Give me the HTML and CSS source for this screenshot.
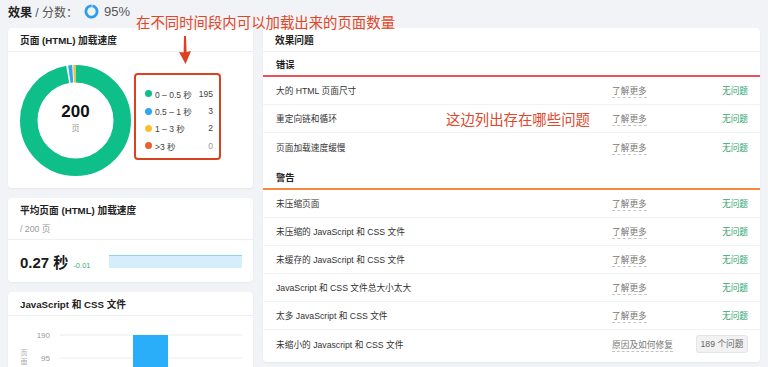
FILE: index.html
```html
<!DOCTYPE html>
<html lang="zh-CN">
<head>
<meta charset="utf-8">
<title>效果</title>
<link rel="stylesheet" href="styles.css">
</head>
<body>
<div class="page">
  <header class="top">
    <span class="top-title">效果</span><span class="top-sub">&nbsp;/ 分数：</span>
    <svg class="ring" width="15" height="15" viewBox="0 0 15 15">
      <circle cx="7.5" cy="7.5" r="5.6" fill="none" stroke="#e6f2fc" stroke-width="2.8"/>
      <circle cx="7.5" cy="7.5" r="5.6" fill="none" stroke="#2f9cf0" stroke-width="2.8" stroke-dasharray="33.4 40" transform="rotate(-80 7.5 7.5)"/>
    </svg>
    <span class="score">95%</span>
  </header>

  <div class="main">
    <div class="left">
      <section class="card">
        <div class="card-head">页面 (HTML) 加载速度</div>
        <div class="speed-body">
          <div class="donut">
            <svg width="111" height="111" viewBox="0 0 111 111">
              <g transform="rotate(-90 55.5 55.5)" fill="none" stroke-width="17.5">
                <circle cx="55.5" cy="55.5" r="46.75" stroke="#0fbf8a" stroke-dasharray="285.4 1000"/>
                <circle cx="55.5" cy="55.5" r="46.75" stroke="#2fa6f2" stroke-dasharray="3.4 1000" stroke-dashoffset="-287"/>
                <circle cx="55.5" cy="55.5" r="46.75" stroke="#f9c12f" stroke-dasharray="2.2 1000" stroke-dashoffset="-291.2"/>
              </g>
            </svg>
            <div class="donut-center">
              <div class="donut-num">200</div>
              <div class="donut-unit">页</div>
            </div>
          </div>
          <ul class="legend">
            <li><i class="dot green"></i><span class="lg-label">0 – 0.5 秒</span><span class="lg-val">195</span></li>
            <li><i class="dot blue"></i><span class="lg-label">0.5 – 1 秒</span><span class="lg-val">3</span></li>
            <li><i class="dot yellow"></i><span class="lg-label">1 – 3 秒</span><span class="lg-val">2</span></li>
            <li><i class="dot orange"></i><span class="lg-label">&gt;3 秒</span><span class="lg-val muted">0</span></li>
          </ul>
        </div>
      </section>

      <section class="card">
        <div class="card-head tall">
          <div class="head-title">平均页面 (HTML) 加载速度</div>
          <div class="head-sub">/ 200 页</div>
        </div>
        <div class="avg-body">
          <div class="avg-val"><span class="big">0.27 秒</span><span class="delta">-0.01</span></div>
          <div class="spark"></div>
        </div>
      </section>

      <section class="card card-chart">
        <div class="card-head">JavaScript 和 CSS 文件</div>
        <svg class="chart" width="245" height="60" viewBox="0 0 245 60">
          <line x1="52" y1="19" x2="234" y2="19" stroke="#ececec" stroke-width="1"/>
          <line x1="52" y1="42" x2="234" y2="42" stroke="#ececec" stroke-width="1"/>
          <text x="42" y="22" text-anchor="end" class="axis">190</text>
          <text x="42" y="45" text-anchor="end" class="axis">95</text>
          <text x="16" y="39" text-anchor="middle" class="axis-title">页</text>
          <text x="16" y="48" text-anchor="middle" class="axis-title">面</text>
          <rect x="125" y="19" width="35" height="41" fill="#2aaefa"/>
        </svg>
      </section>
    </div>

    <section class="card issues">
      <div class="card-head">效果问题</div>
      <div class="sec-head err">错误</div>
      <div class="row"><span class="name">大的 HTML 页面尺寸</span><span class="link"><u>了解更多</u></span><span class="status">无问题</span></div>
      <div class="row"><span class="name">重定向链和循环</span><span class="link"><u>了解更多</u></span><span class="status">无问题</span></div>
      <div class="row last"><span class="name">页面加载速度缓慢</span><span class="link"><u>了解更多</u></span><span class="status">无问题</span></div>
      <div class="sec-head warn">警告</div>
      <div class="row"><span class="name">未压缩页面</span><span class="link"><u>了解更多</u></span><span class="status">无问题</span></div>
      <div class="row"><span class="name">未压缩的 JavaScript 和 CSS 文件</span><span class="link"><u>了解更多</u></span><span class="status">无问题</span></div>
      <div class="row"><span class="name">未缓存的 JavaScript 和 CSS 文件</span><span class="link"><u>了解更多</u></span><span class="status">无问题</span></div>
      <div class="row"><span class="name">JavaScript 和 CSS 文件总大小太大</span><span class="link"><u>了解更多</u></span><span class="status">无问题</span></div>
      <div class="row"><span class="name">太多 JavaScript 和 CSS 文件</span><span class="link"><u>了解更多</u></span><span class="status">无问题</span></div>
      <div class="row last"><span class="name">未缩小的 Javascript 和 CSS 文件</span><span class="link"><u>原因及如何修复</u></span><span class="status"><span class="badge">189 个问题</span></span></div>
    </section>
  </div>

  <div class="note note-top">在不同时间段内可以加载出来的页面数量</div>
  <svg class="arrow" width="20" height="30" viewBox="0 0 20 30">
    <path d="M9 1 L11 1 L11.6 17 L16 16 L10.6 29 L4 17 L8.6 17.4 Z" fill="#dc4220"/>
  </svg>
  <div class="note note-mid">这边列出存在哪些问题</div>
</div>
</body>
</html>
```

FILE: styles.css
```css
* { box-sizing: border-box; }
html, body { height: 100%; overflow: hidden; }
body {
  margin: 0;
  background: #f2f3f6;
  font-family: "Liberation Sans", "Noto Sans CJK SC", sans-serif;
  color: #222;
}
.page { position: relative; padding: 0 8px; }

.top {
  height: 22px;
  margin-bottom: 6px;
  display: flex;
  align-items: center;
  font-size: 12px;
}
.top-title { font-weight: bold; color: #222; }
.top-sub { color: #555; }
.ring { margin-left: 6px; }
.score { margin-left: 5px; font-size: 13px; color: #555; }

.main { display: flex; gap: 10px; align-items: flex-start; }
.left { width: 245px; display: flex; flex-direction: column; gap: 10px; }

.card {
  background: #fff;
  border-radius: 4px;
  box-shadow: 0 1px 2px rgba(0, 0, 0, 0.05);
}
.card-head {
  height: 24px;
  padding: 0 12px;
  display: flex;
  align-items: center;
  border-bottom: 1px solid #eef0f3;
  font-size: 9.7px;
  font-weight: bold;
  color: #222;
}
.card-head.tall {
  height: 42px;
  flex-direction: column;
  align-items: flex-start;
  justify-content: flex-start;
  padding-top: 6px;
}
.head-title { line-height: 14px; }
.head-sub { line-height: 14px; margin-top: 4px; font-weight: normal; color: #999; font-size: 8.7px; }

.speed-body {
  height: 136px;
  padding: 13px 12px;
  display: flex;
  align-items: flex-start;
  gap: 3px;
}
.donut { position: relative; width: 111px; height: 111px; }
.donut svg { display: block; }
.donut-center {
  position: absolute;
  inset: 0;
  display: flex;
  flex-direction: column;
  align-items: center;
  justify-content: center;
}
.donut-num { font-size: 17px; font-weight: bold; line-height: 18px; color: #111; margin-top: -4px; }
.donut-unit { font-size: 8px; color: #999; line-height: 11px; margin-top: 2px; }

.legend {
  list-style: none;
  margin: 8px 0 0;
  width: 87px;
  height: 87px;
  border: 2px solid #d8421f;
  border-radius: 4px;
  padding: 10px 6px 0 9px;
  font-size: 8.5px;
  color: #444;
}
.legend li { display: flex; align-items: center; height: 17.4px; white-space: nowrap; }
.dot { width: 7px; height: 7px; border-radius: 50%; display: inline-block; margin-right: 3px; flex: none; }
.dot.green { background: #0fbf8a; }
.dot.blue { background: #2fa6f2; }
.dot.yellow { background: #f9c12f; }
.dot.orange { background: #e8622e; }
.lg-label { flex: 1; }
.lg-val { text-align: right; }
.lg-val.muted { color: #999; }

.avg-body {
  height: 42px;
  padding: 0 11px 0 12px;
  display: flex;
  align-items: center;
}
.avg-val { display: flex; align-items: baseline; }
.big { font-size: 15px; font-weight: bold; color: #1a1a1a; }
.delta { font-size: 7.5px; color: #3bb07a; margin-left: 5px; }
.spark {
  margin-left: auto;
  width: 133px;
  height: 13px;
  background: #d5eefc;
  border-top: 1px solid #92d2f1;
}

.card-chart { height: 100px; }
.chart { display: block; }
.axis { font-size: 8px; fill: #999; font-family: "Liberation Sans", sans-serif; }
.axis-title { font-size: 7px; fill: #aaa; font-family: "Noto Sans CJK SC", sans-serif; }

.issues { width: 497px; padding-bottom: 4px; }
.sec-head {
  height: 25px;
  padding-left: 13px;
  display: flex;
  align-items: center;
  font-size: 9.2px;
  font-weight: bold;
  color: #222;
}
.sec-head.err { border-bottom: 2px solid #e9525c; }
.sec-head.warn { height: 29px; padding-top: 4px; border-bottom: 2px solid #f58a3e; }

.row {
  height: 28px;
  padding: 0 12px 0 13px;
  display: flex;
  align-items: center;
  border-bottom: 1px solid #f2f3f5;
  font-size: 8.7px;
  color: #333;
}
.row.last { border-bottom: none; }
.name { flex: 1; }
.link { width: 84px; color: #777; }
.link u { text-decoration: none; border-bottom: 1px dashed #c4c4c4; padding-bottom: 1px; }
.status { width: 52px; text-align: right; color: #2ba570; }
.badge {
  display: inline-block;
  width: 52px;
  height: 18px;
  line-height: 16px;
  text-align: center;
  background: #f2f2f3;
  border: 1px solid #e3e4e6;
  border-radius: 3px;
  color: #666;
}

.note {
  position: absolute;
  font-family: "Noto Sans CJK SC", sans-serif;
  font-size: 14.4px;
  line-height: 18px;
  color: #e0472a;
  white-space: nowrap;
}
.note-top { left: 136px; top: 13px; }
.note-mid { left: 446px; top: 110px; }
.arrow { position: absolute; left: 175px; top: 35px; }
```
